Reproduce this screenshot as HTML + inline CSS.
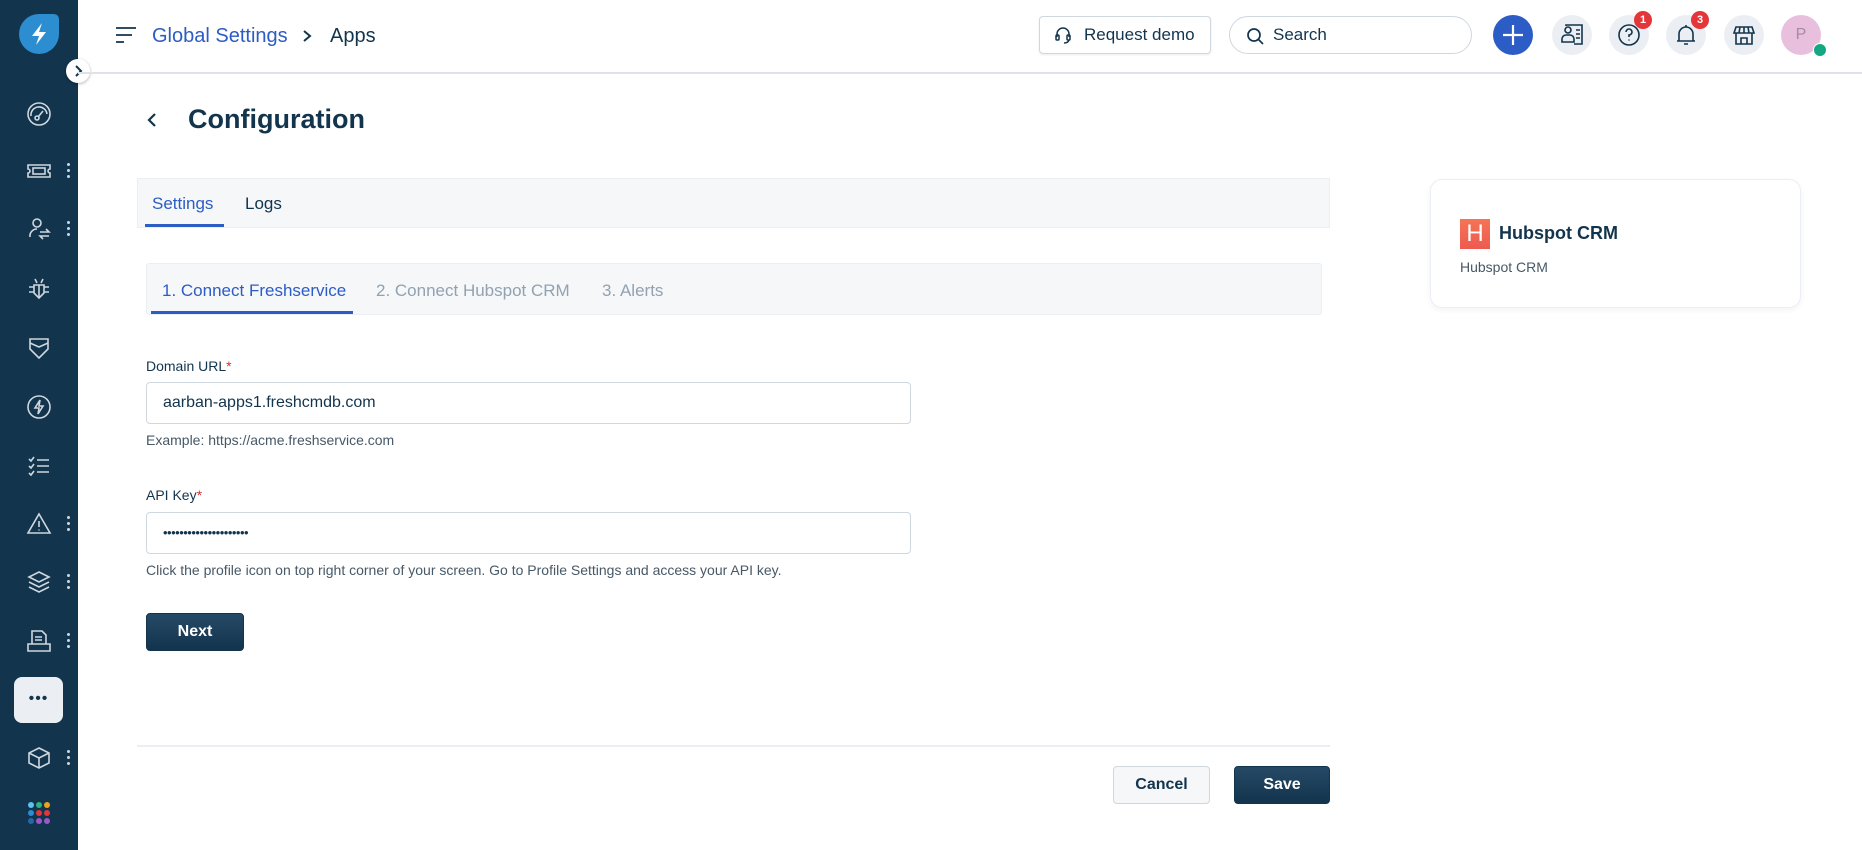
<!DOCTYPE html>
<html><head><meta charset="utf-8"><style>
*{box-sizing:border-box;margin:0;padding:0}
body{width:1862px;height:850px;overflow:hidden;background:#fff;font-family:"Liberation Sans",sans-serif;color:#12344d;position:relative}
.abs{position:absolute}
.sb{left:0;top:0;width:78px;height:850px;background:#12344d}
.ic{position:absolute;left:25px;width:28px;height:28px}
.dots{position:absolute;left:67px;width:4px;height:16px}
.dots i{display:block;width:3px;height:3px;border-radius:50%;background:#cfd7df;margin:0 0 3px 0}
.hdr{left:78px;top:0;right:0;height:74px;border-bottom:2px solid #dfe3e8}
.circ{position:absolute;top:15px;width:40px;height:40px;border-radius:50%;background:#ebeff3}
.badge{position:absolute;width:18px;height:18px;border-radius:50%;background:#e43538;color:#fff;font-size:11px;font-weight:bold;text-align:center;line-height:18px}
.btn{position:absolute;border-radius:4px;font-weight:bold;font-size:16px;text-align:center}
.dark{color:#fff;border:1px solid #12344d;background:linear-gradient(#264966,#12344d)}
.field{position:absolute;left:146px;width:765px;height:42px;border:1px solid #cfd7df;border-radius:4px;padding-left:16px;font-size:16px;color:#12344d;line-height:40px}
.lbl{position:absolute;left:146px;font-size:14px;color:#12344d}
.lbl b{color:#d72d30;font-weight:normal}
.help{position:absolute;left:146px;font-size:14px;color:#475867}
</style></head><body>
<div class="abs sb">
  <svg class="abs" style="left:19px;top:14px" width="40" height="40" viewBox="0 0 40 40"><path d="M20 0H34Q40 0 40 6V20A20 20 0 1 1 20 0Z" fill="#2c8dd0"/><path d="M23 9L13 22H20L17 31L27 18H20Z" fill="#fff"/></svg>
  <div class="abs" style="left:66px;top:59px;width:24px;height:24px;border-radius:50%;background:#fff;box-shadow:0 1px 3px rgba(0,0,0,.3)"><svg width="24" height="24"><path d="M10 7L15 12L10 17" stroke="#12344d" stroke-width="2" fill="none"/></svg></div>
  <svg class="ic" style="top:100px" viewBox="0 0 28 28" fill="none" stroke="#cfd7df" stroke-width="1.6"><circle cx="14" cy="14" r="11"/><path d="M6 16A8 8 0 0 1 22 14"/><circle cx="12" cy="18" r="2"/><path d="M13.5 16.5L18 11"/></svg>
  <svg class="ic" style="top:157px" viewBox="0 0 28 28" fill="none" stroke="#cfd7df" stroke-width="1.6"><path d="M3 8H25V12A2 2 0 0 0 25 16V20H3V16A2 2 0 0 0 3 12Z"/><rect x="8" y="11" width="12" height="6"/></svg>
  <div class="dots" style="top:163px"><i></i><i></i><i></i></div>
  <svg class="ic" style="top:215px" viewBox="0 0 28 28" fill="none" stroke="#cfd7df" stroke-width="1.6"><circle cx="12" cy="8" r="4"/><path d="M5 22A7 7 0 0 1 12 14"/><path d="M15 17H24L21 14M24 21H15L18 24"/></svg>
  <div class="dots" style="top:221px"><i></i><i></i><i></i></div>
  <svg class="ic" style="top:275px" viewBox="0 0 28 28" fill="none" stroke="#cfd7df" stroke-width="1.6"><path d="M9 10H19V18L14 23L9 18Z"/><path d="M10 4L12 8M18 4L16 8M4 12H9M19 12H24M4 17H9M19 17H24M14 10V22"/></svg>
  <svg class="ic" style="top:334px" viewBox="0 0 28 28" fill="none" stroke="#cfd7df" stroke-width="1.6"><path d="M5 5H23V15L14 24L5 15Z"/><path d="M5 9L14 13L23 9"/></svg>
  <svg class="ic" style="top:393px" viewBox="0 0 28 28" fill="none" stroke="#cfd7df" stroke-width="1.6"><circle cx="14" cy="14" r="11"/><path d="M15 7L10 15H14L13 21L18 13H14Z"/></svg>
  <svg class="ic" style="top:452px" viewBox="0 0 28 28" fill="none" stroke="#cfd7df" stroke-width="1.6"><path d="M4 7L6 9L9 5M4 14L6 16L9 12M4 21L6 23L9 19M12 8H24M12 14H24M12 20H24"/></svg>
  <svg class="ic" style="top:510px" viewBox="0 0 28 28" fill="none" stroke="#cfd7df" stroke-width="1.6"><path d="M14 4L25 23H3Z"/><path d="M14 11V17M14 19.5V20.5"/></svg>
  <div class="dots" style="top:516px"><i></i><i></i><i></i></div>
  <svg class="ic" style="top:568px" viewBox="0 0 28 28" fill="none" stroke="#cfd7df" stroke-width="1.6"><path d="M14 4L24 9L14 14L4 9Z"/><path d="M4 14L14 19L24 14M4 19L14 24L24 19"/></svg>
  <div class="dots" style="top:574px"><i></i><i></i><i></i></div>
  <svg class="ic" style="top:627px" viewBox="0 0 28 28" fill="none" stroke="#cfd7df" stroke-width="1.6"><path d="M7 17V4H17L21 8V17"/><path d="M3 17H25V24H3Z"/><path d="M10 10H17M10 13H17"/></svg>
  <div class="dots" style="top:633px"><i></i><i></i><i></i></div>
  <div class="abs" style="left:14px;top:677px;width:49px;height:46px;border-radius:8px;background:#ebeff3;text-align:center;line-height:44px;font-size:16px;color:#12344d;letter-spacing:1px">•••</div>
  <svg class="ic" style="top:744px" viewBox="0 0 28 28" fill="none" stroke="#cfd7df" stroke-width="1.6"><path d="M14 4L24 9V19L14 24L4 19V9Z"/><path d="M4 9L14 14L24 9M14 14V24"/></svg>
  <div class="dots" style="top:750px"><i></i><i></i><i></i></div>
  <svg class="abs" style="left:28px;top:802px" width="22" height="22"><circle cx="3" cy="3" r="3" fill="#5bc3ee"/><circle cx="11" cy="3" r="3" fill="#2fb27e"/><circle cx="19" cy="3" r="3" fill="#f0a31a"/><circle cx="3" cy="11" r="3" fill="#2c8dd0"/><circle cx="11" cy="11" r="3" fill="#e43538"/><circle cx="19" cy="11" r="3" fill="#e43538"/><circle cx="3" cy="19" r="3" fill="#2667aa"/><circle cx="11" cy="19" r="3" fill="#9b59c5"/><circle cx="19" cy="19" r="3" fill="#9b59c5"/></svg>
</div>
<div class="abs hdr"></div>
<svg class="abs" style="left:115px;top:26px" width="22" height="18"><path d="M1 2H21M1 9H17M1 16H9" stroke="#12344d" stroke-width="1.8"/></svg>
<div class="abs" style="left:152px;top:25px;font-size:20px;color:#2c5cc5;font-weight:500">Global Settings</div>
<svg class="abs" style="left:300px;top:28px" width="14" height="16"><path d="M4 3L10 8L4 13" stroke="#12344d" stroke-width="2" fill="none"/></svg>
<div class="abs" style="left:330px;top:25px;font-size:20px;color:#12344d;font-weight:500">Apps</div>
<div class="abs" style="left:1039px;top:16px;width:172px;height:38px;border:1px solid #cfd7df;border-radius:4px;box-shadow:0 1px 2px rgba(0,0,0,.08)">
  <svg class="abs" style="left:14px;top:9px" width="18" height="18" viewBox="0 0 18 18" fill="none" stroke="#12344d" stroke-width="1.5"><path d="M3 11V8A6 6 0 0 1 15 8V11"/><rect x="2" y="9" width="3" height="5" rx="1"/><rect x="13" y="9" width="3" height="5" rx="1"/><path d="M15 14Q14 17 10 17"/></svg>
  <div class="abs" style="left:44px;top:8px;font-size:17px">Request demo</div>
</div>
<div class="abs" style="left:1229px;top:16px;width:243px;height:38px;border:1px solid #cfd7df;border-radius:19px">
  <svg class="abs" style="left:16px;top:10px" width="18" height="18" fill="none" stroke="#12344d" stroke-width="1.7"><circle cx="8" cy="8" r="6"/><path d="M12.5 12.5L17 17"/></svg>
  <div class="abs" style="left:43px;top:8px;font-size:17px">Search</div>
</div>
<div class="abs" style="left:1493px;top:15px;width:40px;height:40px;border-radius:50%;background:#2c5cc5"><svg width="40" height="40"><path d="M20 10V30M10 20H30" stroke="#fff" stroke-width="2.2"/></svg></div>
<div class="circ" style="left:1552px"><svg width="40" height="40" fill="none" stroke="#12344d" stroke-width="1.6"><circle cx="16" cy="15" r="3"/><path d="M10 27V24A4 4 0 0 1 14 20H18A4 4 0 0 1 22 24V27Z"/><path d="M14 11V10H30V29H22M24 15H28M24 19H28M24 23H28"/></svg></div>
<div class="circ" style="left:1609px"><svg width="40" height="40" fill="none" stroke="#12344d" stroke-width="1.6"><circle cx="20" cy="20" r="10"/><path d="M17 17A3 3 0 1 1 20 20V22M20 24.5V25.5"/></svg></div>
<div class="badge" style="left:1634px;top:11px">1</div>
<div class="circ" style="left:1666px"><svg width="40" height="40" fill="none" stroke="#12344d" stroke-width="1.6"><path d="M13 26V19A7 7 0 0 1 27 19V26H29H11Z"/><path d="M18 29H22M20 10V12"/></svg></div>
<div class="badge" style="left:1691px;top:11px">3</div>
<div class="circ" style="left:1724px"><svg width="40" height="40" fill="none" stroke="#12344d" stroke-width="1.6"><path d="M12 12H28L30 18H10Z"/><path d="M16 12L15 18M20 12V18M24 12L25 18M12 18V29H28V18M17 29V23H23V29"/></svg></div>
<div class="abs" style="left:1781px;top:15px;width:40px;height:40px;border-radius:50%;background:#e8c0de;color:#a58aa0;font-size:16px;text-align:center;line-height:40px">P</div>
<div class="abs" style="left:1813px;top:43px;width:14px;height:14px;border-radius:50%;background:#13a883;border:1px solid #fff"></div>

<svg class="abs" style="left:145px;top:111px" width="14" height="18"><path d="M10 3L4 9L10 15" stroke="#12344d" stroke-width="2.2" fill="none"/></svg>
<div class="abs" style="left:188px;top:104px;font-size:27px;font-weight:bold">Configuration</div>

<div class="abs" style="left:137px;top:178px;width:1193px;height:50px;background:#f5f7f9;border:1px solid #ebeff3"></div>
<div class="abs" style="left:152px;top:194px;font-size:17px;color:#2c5cc5">Settings</div>
<div class="abs" style="left:145px;top:224px;width:79px;height:3px;background:#2c5cc5"></div>
<div class="abs" style="left:245px;top:194px;font-size:17px;color:#12344d">Logs</div>

<div class="abs" style="left:146px;top:263px;width:1176px;height:52px;background:#f5f7f9;border:1px solid #ebeff3;border-radius:3px"></div>
<div class="abs" style="left:162px;top:281px;font-size:17px;color:#2c5cc5">1. Connect Freshservice</div>
<div class="abs" style="left:151px;top:311px;width:202px;height:3px;background:#2c5cc5"></div>
<div class="abs" style="left:376px;top:281px;font-size:17px;color:#92a2b1">2. Connect Hubspot CRM</div>
<div class="abs" style="left:602px;top:281px;font-size:17px;color:#92a2b1">3. Alerts</div>

<div class="lbl" style="top:358px">Domain URL<b>*</b></div>
<div class="field" style="top:382px">aarban-apps1.freshcmdb.com</div>
<div class="help" style="top:432px">Example: https://acme.freshservice.com</div>
<div class="lbl" style="top:487px">API Key<b>*</b></div>
<div class="field" style="top:512px;font-size:13px;letter-spacing:-0.5px">•••••••••••••••••••••</div>
<div class="help" style="top:562px">Click the profile icon on top right corner of your screen. Go to Profile Settings and access your API key.</div>
<div class="btn dark" style="left:146px;top:613px;width:98px;height:38px;line-height:36px">Next</div>

<div class="abs" style="left:137px;top:745px;width:1193px;height:2px;background:#ebeff3"></div>
<div class="btn" style="left:1113px;top:766px;width:97px;height:38px;line-height:36px;border:1px solid #cfd7df;background:#f5f7f9;color:#12344d">Cancel</div>
<div class="btn dark" style="left:1234px;top:766px;width:96px;height:38px;line-height:36px">Save</div>

<div class="abs" style="left:1430px;top:179px;width:371px;height:129px;border:1px solid #ebeff3;border-radius:12px;box-shadow:0 2px 6px rgba(18,52,77,.06)">
  <div class="abs" style="left:29px;top:39px;width:30px;height:30px;background:linear-gradient(#f57456,#ee5a4f);color:#fff;font-size:24px;text-align:center;line-height:30px">H</div>
  <div class="abs" style="left:68px;top:43px;font-size:18px;font-weight:bold">Hubspot CRM</div>
  <div class="abs" style="left:29px;top:79px;font-size:14px;color:#475867">Hubspot CRM</div>
</div>
</body></html>
